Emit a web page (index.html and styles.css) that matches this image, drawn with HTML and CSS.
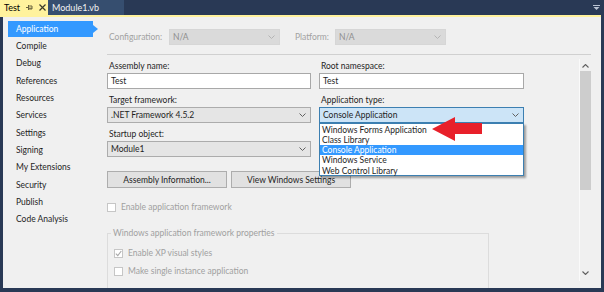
FILE: index.html
```html
<!DOCTYPE html>
<html>
<head>
<meta charset="utf-8">
<link rel="stylesheet" href="styles.css">
</head>
<body>
<div class="tabs">
  <div class="tab-active">
    <span class="tab-title">Test</span>
    <svg class="pin" width="7" height="7" viewBox="0 0 7 7"><path d="M0 3.5H2.5M2.5 1V6M2.5 2H6V5H2.5M2.5 4.2H6" stroke="#6b6440" stroke-width="1" fill="none"/></svg>
    <svg class="close" width="7" height="7" viewBox="0 0 7 7"><path d="M0.5 0.5L6.5 6.5M6.5 0.5L0.5 6.5" stroke="#3a3a2a" stroke-width="1.2"/></svg>
  </div>
  <div class="tab">Module1.vb</div>
  <div class="tabs-fill">
    <svg class="menu-arrow" width="7" height="6" viewBox="0 0 7 6"><path d="M0 0.5H7" stroke="#b9c3d3" stroke-width="1"/><path d="M0.5 2H6.5L3.5 5Z" fill="#b9c3d3"/></svg>
  </div>
</div>
<div class="accent"></div>
<div class="frame">
  <div class="page">
    <nav class="nav">
      <div class="nav-item selected">Application</div>
      <div class="nav-item">Compile</div>
      <div class="nav-item">Debug</div>
      <div class="nav-item">References</div>
      <div class="nav-item">Resources</div>
      <div class="nav-item">Services</div>
      <div class="nav-item">Settings</div>
      <div class="nav-item">Signing</div>
      <div class="nav-item">My Extensions</div>
      <div class="nav-item">Security</div>
      <div class="nav-item">Publish</div>
      <div class="nav-item">Code Analysis</div>
    </nav>
    <main class="main">
      <div class="config-row">
        <span class="cfg-label cfg-first">Configuration:</span>
        <div class="combo disabled cfg-combo"><span>N/A</span><svg class="chev" width="7" height="4" viewBox="0 0 7 4"><path d="M0.5 0.5L3.5 3.5L6.5 0.5" stroke="#b4b4b4" fill="none"/></svg></div>
        <span class="cfg-label cfg-second">Platform:</span>
        <div class="combo disabled cfg-combo"><span>N/A</span><svg class="chev" width="7" height="4" viewBox="0 0 7 4"><path d="M0.5 0.5L3.5 3.5L6.5 0.5" stroke="#b4b4b4" fill="none"/></svg></div>
      </div>
      <div class="separator"></div>
      <div class="scroll-body">
        <div class="form">
          <div class="grid">
            <div class="field">
              <div class="label">Assembly name:</div>
              <div class="textbox">Test</div>
            </div>
            <div class="field">
              <div class="label">Root namespace:</div>
              <div class="textbox">Test</div>
            </div>
            <div class="field">
              <div class="label">Target framework:</div>
              <div class="combo"><span>.NET Framework 4.5.2</span><svg class="chev" width="7" height="4" viewBox="0 0 7 4"><path d="M0.5 0.5L3.5 3.5L6.5 0.5" stroke="#606060" fill="none"/></svg></div>
            </div>
            <div class="field">
              <div class="label">Application type:</div>
              <div class="combo-wrap">
                <div class="combo open"><span>Console Application</span><svg class="chev" width="7" height="4" viewBox="0 0 7 4"><path d="M0.5 0.5L3.5 3.5L6.5 0.5" stroke="#606060" fill="none"/></svg></div>
                <ul class="dropdown">
                  <li>Windows Forms Application</li>
                  <li>Class Library</li>
                  <li class="sel">Console Application</li>
                  <li>Windows Service</li>
                  <li>Web Control Library</li>
                </ul>
              </div>
            </div>
            <div class="field">
              <div class="label">Startup object:</div>
              <div class="combo"><span>Module1</span><svg class="chev" width="7" height="4" viewBox="0 0 7 4"><path d="M0.5 0.5L3.5 3.5L6.5 0.5" stroke="#606060" fill="none"/></svg></div>
            </div>
          </div>
          <div class="buttons">
            <div class="button">Assembly Information...</div>
            <div class="button">View Windows Settings</div>
          </div>
          <div class="check-row top-check">
            <span class="box"></span><span>Enable application framework</span>
          </div>
          <fieldset class="group">
            <legend>Windows application framework properties</legend>
            <div class="check-row first-in-group">
              <span class="box"><svg width="7" height="7" viewBox="0 0 7 7"><path d="M0.8 3.6L2.8 5.6L6.3 1" stroke="#a8a8a8" stroke-width="1.1" fill="none"/></svg></span><span>Enable XP visual styles</span>
            </div>
            <div class="check-row second-in-group">
              <span class="box"></span><span>Make single instance application</span>
            </div>
          </fieldset>
        </div>
        <div class="scrollbar">
          <svg class="sb-up" width="7" height="4" viewBox="0 0 7 4"><path d="M0.5 3.5L3.5 0.5L6.5 3.5" stroke="#606060" fill="none" stroke-width="1.1"/></svg>
          <div class="thumb"></div>
          <svg class="sb-down" width="7" height="4" viewBox="0 0 7 4"><path d="M0.5 0.5L3.5 3.5L6.5 0.5" stroke="#606060" fill="none" stroke-width="1.1"/></svg>
        </div>
      </div>
    </main>
    <svg class="red-arrow" width="56" height="27" viewBox="0 0 56 27"><polygon points="2,13 25,1 25,7 52,7 52,18 25,18 25,25" fill="#e8202a"/></svg>
  </div>
</div>
</body>
</html>
```
FILE: styles.css
```css
* { box-sizing: border-box; }
html, body {
  margin: 0;
  padding: 0;
}
body {
  width: 604px;
  height: 292px;
  overflow: hidden;
  background: #293955;
  font-family: Lato, "Liberation Sans", sans-serif;
  font-size: 8.5px;
  color: #1e1e1e;
}
.tabs {
  display: flex;
  height: 15px;
}
.tab-active {
  width: 48px;
  background: #fff29d;
  display: flex;
  align-items: center;
  padding-left: 4px;
  color: #000;
  font-size: 9px;
}
.tab-title { width: 22px; }
.pin { margin-right: 6px; }
.tab {
  width: 76px;
  background: #364e6f;
  color: #f2f2f2;
  font-size: 9px;
  display: flex;
  align-items: center;
  padding-left: 4px;
}
.tabs-fill {
  flex: 1;
  display: flex;
  justify-content: flex-end;
  align-items: center;
  padding-right: 4px;
}
.accent {
  height: 2px;
  background: #fff29d;
  margin-right: 3px;
}
.frame {
  height: 275px;
  padding: 0 3px 4px 3px;
}
.page {
  position: relative;
  height: 100%;
  background: #f0f0f0;
  display: grid;
  grid-template-columns: 104px 1fr;
  overflow: hidden;
}
.nav {
  padding-top: 3px;
}
.nav-item {
  height: 17.35px;
  line-height: 17.35px;
  padding-left: 13px;
  white-space: nowrap;
}
.nav-item.selected {
  position: relative;
  margin-left: 5px;
  padding-left: 8px;
  width: 85px;
  height: 16px;
  line-height: 16px;
  margin-top: 0.5px;
  margin-bottom: 1.35px;
  background: #3399ff;
  color: #fff;
}
.nav-item.selected::after {
  content: "";
  position: absolute;
  right: -5px;
  top: 4px;
  border-left: 5px solid #3399ff;
  border-top: 4px solid transparent;
  border-bottom: 4px solid transparent;
}
.main {
  display: flex;
  flex-direction: column;
}
.config-row {
  margin-top: 12px;
  height: 16px;
  display: flex;
  align-items: center;
}
.cfg-label {
  color: #a2a2a2;
}
.cfg-first {
  width: 62px;
  padding-left: 2px;
}
.cfg-second {
  width: 40px;
  margin-left: 15px;
}
.cfg-combo {
  width: 111px;
}
.combo {
  height: 16px;
  border: 1px solid #acacac;
  background: #e5e5e5;
  display: flex;
  align-items: center;
  justify-content: space-between;
  padding: 0 4px 0 3px;
  white-space: nowrap;
}
.combo.disabled {
  background: #dadada;
  border-color: #d6d6d6;
  color: #8e8e8e;
}
.combo.open {
  background: #cce4f7;
  border-color: #3c7fb1;
}
.chev { flex: none; }
.separator {
  margin-top: 9px;
  height: 1px;
  width: 484px;
  background: #d0d0d0;
}
.scroll-body {
  display: flex;
  flex: 1;
}
.form {
  width: 472px;
}
.grid {
  display: grid;
  grid-template-columns: 204px 205px;
  column-gap: 8px;
  row-gap: 5px;
  margin-top: 5px;
}
.label {
  height: 13px;
  line-height: 13px;
  padding-left: 2px;
}
.textbox {
  height: 16px;
  border: 1px solid #a8a8a8;
  background: #fff;
  padding-left: 3px;
  line-height: 14px;
}
.combo-wrap {
  position: relative;
}
.dropdown {
  position: absolute;
  left: 0;
  top: 16px;
  width: 205px;
  height: 53px;
  margin: 0;
  padding: 0.5px 0 0 0;
  list-style: none;
  background: #fff;
  border: 1px solid #3c7fb1;
  box-shadow: 2px 2px 2px rgba(0, 0, 0, 0.35);
  z-index: 2;
}
.dropdown li {
  height: 10.3px;
  line-height: 10.3px;
  padding-left: 2px;
  white-space: nowrap;
}
.dropdown li.sel {
  background: #3399ff;
  color: #fff;
}
.buttons {
  display: flex;
  gap: 4px;
  margin-top: 14px;
}
.button {
  width: 120px;
  height: 17px;
  border: 1px solid #adadad;
  background: #e1e1e1;
  display: flex;
  align-items: center;
  justify-content: center;
}
.check-row {
  display: flex;
  align-items: center;
  height: 12px;
  color: #a0a0a0;
  gap: 5px;
}
.top-check {
  margin-top: 13px;
}
.box {
  width: 9px;
  height: 9px;
  border: 1px solid #c6c6c6;
  background: #fff;
  display: flex;
  align-items: center;
  justify-content: center;
}
.group {
  margin: 14px 0 0 0;
  width: 382px;
  height: 80px;
  padding: 0 6px;
  border: 1px solid #dcdcdc;
}
.group legend {
  padding: 0 2px;
  margin-left: -3px;
  height: 12px;
  line-height: 12px;
  color: #a0a0a0;
}
.first-in-group { margin-top: 8px; }
.second-in-group { margin-top: 6px; }
.scrollbar {
  position: relative;
  margin-top: 4px;
  width: 12px;
  height: 222px;
  background: #f0f0f0;
  border-left: 1px solid #fafafa;
  display: flex;
  flex-direction: column;
  align-items: center;
}
.sb-up { margin-top: 5px; }
.thumb {
  margin-top: 3px;
  width: 11px;
  height: 119px;
  background: #cdcdcd;
}
.sb-down { margin-top: auto; margin-bottom: 6px; }
.red-arrow {
  position: absolute;
  left: 427px;
  top: 99px;
  z-index: 3;
}
```
